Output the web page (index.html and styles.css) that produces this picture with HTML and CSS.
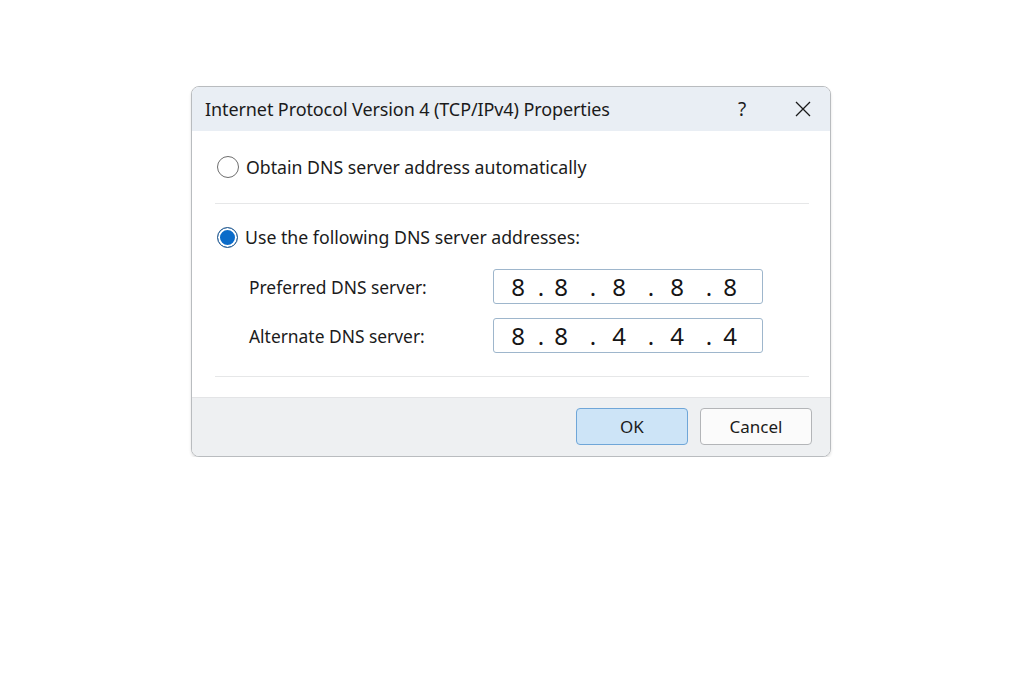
FILE: index.html
```html
<!DOCTYPE html>
<html lang="en">
<head>
<meta charset="utf-8">
<title>Internet Protocol Version 4 (TCP/IPv4) Properties</title>
<link rel="stylesheet" href="styles.css">
</head>
<body>
<div class="dialog">
  <div class="titlebar">
    <span class="title">Internet Protocol Version 4 (TCP/IPv4) Properties</span>
    <span class="help">?</span>
    <span class="close">
      <svg width="16" height="16" viewBox="0 0 16 16"><path d="M1 1 L15 15 M15 1 L1 15" stroke="#1a1a1a" stroke-width="1.3" fill="none"/></svg>
    </span>
  </div>
  <div class="content">
    <div class="option first">
      <span class="radio"></span>
      <span class="label">Obtain DNS server address automatically</span>
    </div>
    <div class="sep"></div>
    <div class="option second">
      <span class="radio checked"></span>
      <span class="label">Use the following DNS server addresses:</span>
    </div>
    <div class="field">
      <span class="flabel">Preferred DNS server:</span>
      <div class="ip">
        <span class="seg">8</span><span class="seg">.</span><span class="seg">8</span><span class="seg">.</span><span class="seg">8</span><span class="seg">.</span><span class="seg">8</span><span class="seg">.</span><span class="seg">8</span>
      </div>
    </div>
    <div class="field">
      <span class="flabel">Alternate DNS server:</span>
      <div class="ip">
        <span class="seg">8</span><span class="seg">.</span><span class="seg">8</span><span class="seg">.</span><span class="seg">4</span><span class="seg">.</span><span class="seg">4</span><span class="seg">.</span><span class="seg">4</span>
      </div>
    </div>
    <div class="sep bottom"></div>
  </div>
  <div class="footer">
    <button class="btn ok">OK</button>
    <button class="btn cancel">Cancel</button>
  </div>
</div>
</body>
</html>
```
FILE: styles.css
```css
html, body {
  margin: 0;
  padding: 0;
  background: #ffffff;
}
body {
  font-family: "Noto Sans", "Open Sans", sans-serif;
  color: #1b1b1b;
  padding-top: 86px;
}
.dialog {
  margin-left: 191px;
  width: 638px;
  border: 1px solid #b9bcbf;
  border-radius: 8px;
  overflow: hidden;
  background: #ffffff;
  box-shadow: 0 2px 3px rgba(0,0,0,0.12);
}
.titlebar {
  height: 44px;
  background: #e9eef4;
  display: flex;
  align-items: center;
  padding-left: 13px;
}
.title {
  font-size: 18px;
  flex: 1;
  letter-spacing: -0.1px;
}
.help {
  font-size: 19px;
  width: 30px;
  text-align: center;
  margin-right: 38px;
}
.close {
  width: 16px;
  height: 16px;
  margin-right: 19px;
  display: flex;
}
.content {
  padding: 0 21px 0 23px;
}
.option {
  display: flex;
  align-items: center;
  height: 22px;
}
.option.first {
  margin-top: 25px;
  margin-bottom: 25px;
}
.option.second {
  margin-top: 22px;
}
.radio {
  width: 20px;
  height: 20px;
  border: 1px solid #6e6e6e;
  border-radius: 50%;
  background: #ffffff;
  margin-left: 2px;
  margin-right: 7px;
  flex: none;
}
.radio.checked {
  border: 1.5px solid #2e5c8a;
  width: 19px;
  height: 19px;
  background: #0a6bc9;
  box-shadow: inset 0 0 0 2px #ffffff;
}
.label {
  font-size: 17.7px;
}
.sep {
  height: 1px;
  background: #e6e7e8;
}
.field {
  display: flex;
  align-items: center;
  height: 35px;
  padding-left: 34px;
  margin-top: 14px;
}
.option.second + .field {
  margin-top: 21px;
}
.flabel {
  width: 244px;
  font-size: 17.4px;
}
.ip {
  width: 268px;
  height: 33px;
  border: 1px solid #9eb6cc;
  border-radius: 3px;
  display: grid;
  grid-template-columns: 24px 23px 20px 32px 26px 32px 26px 32px 21px 1fr;
  align-items: center;
  font-size: 24px;
  color: #151515;
}
.seg {
  width: 0;
  display: flex;
  justify-content: center;
  justify-self: end;
  white-space: nowrap;
  line-height: 1;
}
.sep.bottom {
  margin-top: 23px;
}
.footer {
  margin-top: 20px;
  height: 59px;
  background: #eef0f2;
  border-top: 1px solid #e3e4e6;
  display: flex;
  justify-content: flex-end;
  align-items: flex-start;
  padding-top: 10px;
  padding-right: 18px;
  box-sizing: border-box;
  gap: 12px;
}
.btn {
  width: 112px;
  height: 37px;
  border-radius: 4px;
  font-family: "Noto Sans", "Open Sans", sans-serif;
  font-size: 17px;
  color: #1b1b1b;
  padding: 0;
}
.btn.ok {
  background: #cde4f7;
  border: 1px solid #6fa6d8;
}
.btn.cancel {
  background: #fbfbfb;
  border: 1px solid #b3b5b8;
}
```
